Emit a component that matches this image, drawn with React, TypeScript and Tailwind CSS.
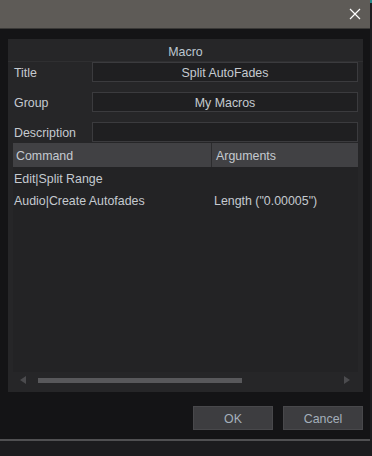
import React from "react";

const font = { fontFamily: '"Liberation Sans", Arial, sans-serif' };

function Field({ label, value }: { label: string; value: string }) {
  return (
    <div className="flex items-center h-[20px]">
      <div className="w-[84px] pl-[6px] pt-[2px] text-[#c5cad0]">{label}</div>
      <div className="flex-1 mr-[5px] h-[20px] pt-[2px] bg-[#1f1f21] border border-[#3b3b3e] flex items-center justify-center text-[#c5cad0]">
        {value}
      </div>
    </div>
  );
}

export default function App() {
  return (
    <div className="w-[372px] h-[456px] bg-[#1c1c1e] flex flex-col text-[12.4px] leading-none overflow-hidden" style={font}>
      <div className="flex h-[441px]">
        <div className="w-[370px] flex flex-col border-b-2 border-[#505052]">
          <div className="h-[29px] bg-[#5e5b57] flex items-center justify-end pr-[8px] border-b border-[#3a3937]">
            <svg width="12" height="12" viewBox="0 0 12 12" className="mr-[1px]">
              <path d="M1 1 L11 11 M11 1 L1 11" stroke="#ffffff" strokeWidth="1.2" fill="none" />
            </svg>
          </div>
          <div className="flex-1 bg-[#141416] flex flex-col pl-[8px] pr-[7px] pt-[10px]">
            <div className="h-[353px] bg-[#262628] flex flex-col">
              <div className="h-[23px] pt-[4px] border-b border-[#2f2f31] flex items-center justify-center text-[#bcc6d0]">
                Macro
              </div>
              <div className="flex flex-col gap-[10px]">
                <Field label="Title" value="Split AutoFades" />
                <Field label="Group" value="My Macros" />
                <Field label="Description" value="" />
              </div>
              <div className="flex-1 flex flex-col ml-[5px] mr-[5px] mt-[1px] bg-[#232325]">
                <div className="h-[24px] bg-[#414144] flex text-[#c5cad0]">
                  <div className="w-[199px] pl-[3px] pt-[2px] flex items-center border-r border-[#2c2c2e]">Command</div>
                  <div className="flex-1 pl-[4px] pt-[2px] flex items-center">Arguments</div>
                </div>
                <div className="h-[22px] pt-[2px] flex items-center text-[#c5cad0]">
                  <div className="w-[200px] pl-[1px]">Edit|Split Range</div>
                  <div className="flex-1 pl-[1px]"></div>
                </div>
                <div className="h-[22px] pt-[3px] flex items-center text-[#c5cad0]">
                  <div className="w-[200px] pl-[1px]">Audio|Create Autofades</div>
                  <div className="flex-1 pl-[1px]">Length ("0.00005")</div>
                </div>
                <div className="flex-1" />
              </div>
              <div className="h-[20px] flex items-center pl-[12px] pr-[13px] pb-[4px]">
                <svg width="6" height="8" viewBox="0 0 6 8">
                  <path d="M6 0 L0 4 L6 8 Z" fill="#4b4b4e" />
                </svg>
                <div className="ml-[12px] w-[204px] h-[5px] bg-[#58585b]" />
                <div className="flex-1" />
                <svg width="6" height="8" viewBox="0 0 6 8">
                  <path d="M0 0 L6 4 L0 8 Z" fill="#4b4b4e" />
                </svg>
              </div>
            </div>
            <div className="flex justify-end gap-[10px] mt-[14px]">
              <div className="w-[80px] h-[24px] pt-[2px] bg-[#3d3d40] border border-[#48484b] flex items-center justify-center text-[#a4afbb]">
                OK
              </div>
              <div className="w-[80px] h-[24px] pt-[2px] bg-[#3d3d40] border border-[#48484b] flex items-center justify-center text-[#a4afbb]">
                Cancel
              </div>
            </div>
          </div>
        </div>
        <div className="w-[2px] bg-[#1e1e20] relative">
          <div className="absolute top-0 right-0 w-[2px] h-[3px] bg-[#2a8a8a]" />
        </div>
      </div>
      <div className="flex-1 bg-[#1c1c1e]" />
    </div>
  );
}
